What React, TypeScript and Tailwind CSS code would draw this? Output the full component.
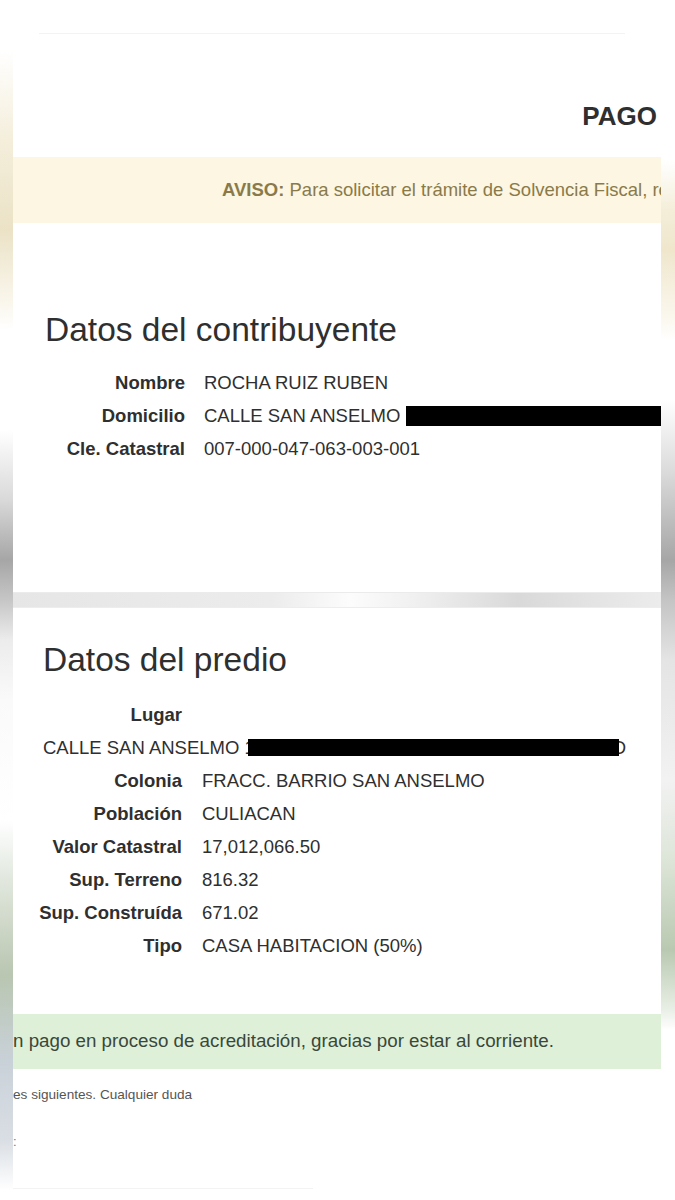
import React from "react";

const contribuyente = [
  { label: "Nombre", value: "ROCHA RUIZ RUBEN" },
  { label: "Domicilio", value: "CALLE SAN ANSELMO", redacted: true },
  { label: "Cle. Catastral", value: "007-000-047-063-003-001" },
];

const predio = [
  { label: "Colonia", value: "FRACC. BARRIO SAN ANSELMO" },
  { label: "Población", value: "CULIACAN" },
  { label: "Valor Catastral", value: "17,012,066.50" },
  { label: "Sup. Terreno", value: "816.32" },
  { label: "Sup. Construída", value: "671.02" },
  { label: "Tipo", value: "CASA HABITACION (50%)" },
];

const Row = ({ label, value, redacted, labelW }: { label: string; value: string; redacted?: boolean; labelW: string }) => (
  <div className="flex items-center h-[33px] whitespace-nowrap">
    <span className={`${labelW} shrink-0 text-right font-bold`}>{label}</span>
    <span className="ml-[19px]">{value}</span>
    {redacted && <span className="flex-1 ml-[6px] h-[20px] bg-black" />}
  </div>
);

export default function App() {
  return (
    <div className="w-[675px] h-[1200px] flex overflow-hidden bg-white text-[#2f2f2f] font-['Liberation_Sans',Arial,sans-serif]">
      {/* blurred backdrop, left */}
      <div className="w-[13px] shrink-0 bg-[linear-gradient(to_bottom,#fff_0px,#fff_50px,#f4eedb_140px,#ebe2c6_230px,#faf7ee_305px,#fff_330px,#fff_430px,#d9d9d9_500px,#a6a6a6_560px,#c6c6c6_600px,#ececec_640px,#fafafa_700px,#fff_820px,#e1e7dd_880px,#b9c6b1_975px,#c9d1d8_1060px,#d9dee4_1140px,#fff_1190px)]" />

      <div className="w-[648px] shrink-0 flex flex-col">
        {/* first capture */}
        <div className="h-[593px] flex flex-col bg-white border-b border-[#ebebeb]">
          <div className="mt-[33px] ml-[26px] w-[586px] h-px bg-[#f3f3f3]" />
          <div className="mt-[69px] pr-[4px] text-right text-[26px] leading-[26px] font-bold">PAGO</div>
          <div className="mt-[28px] h-[66px] flex items-center pl-[209px] bg-[#fcf6e2] text-[#8a7a4a] text-[18.5px] whitespace-nowrap overflow-hidden">
            <span>
              <b>AVISO:</b> Para solicitar el trámite de Solvencia Fiscal, re
            </span>
          </div>
          <h2 className="mt-[87px] pl-[32px] text-[33.5px] leading-[40px]">Datos del contribuyente</h2>
          <div className="mt-[16px] text-[18.5px]">
            {contribuyente.map((r) => (
              <Row key={r.label} {...r} labelW="w-[172px]" />
            ))}
          </div>
        </div>

        {/* seam between the two captures */}
        <div className="h-[14px] shrink-0 bg-[linear-gradient(to_right,#e6e6e6,#ececec_40%,#fcfcfc_52%,#f0f0f0_62%,#d9d9d9_78%,#e4e4e4_90%,#ececec)]" />

        {/* second capture */}
        <div className="flex-1 flex flex-col bg-white border-t border-[#ededed]">
          <h2 className="mt-[32px] pl-[30px] text-[33.5px] leading-[40px]">Datos del predio</h2>
          <div className="mt-[18px] text-[18.5px]">
            <div className="flex items-center h-[33px]">
              <span className="w-[169px] text-right font-bold">Lugar</span>
            </div>
            <div className="flex items-center h-[33px] pl-[30px] whitespace-nowrap">
              <span>CALLE SAN ANSELMO 1</span>
              <span className="relative z-10 -ml-[7px] w-[371px] h-[17px] bg-black" />
              <span className="-ml-[6px]">D</span>
            </div>
            {predio.map((r) => (
              <div key={r.label} className="flex items-center h-[33px] whitespace-nowrap">
                <span className="w-[169px] shrink-0 text-right font-bold">{r.label}</span>
                <span className="ml-[20px]">{r.value}</span>
              </div>
            ))}
          </div>
          <div className="mt-[52px] h-[55px] flex items-center bg-[#dff0d8] text-[#3a473a] text-[18.75px] whitespace-nowrap overflow-hidden">
            n pago en proceso de acreditación, gracias por estar al corriente.
          </div>
          <p className="mt-[18px] text-[13.6px] leading-[16px] text-[#555]">es siguientes. Cualquier duda</p>
          <p className="mt-[31px] text-[13px] leading-[16px] text-[#777]">:</p>
          <div className="mt-[38px] w-[300px] h-px bg-[#f3f3f3]" />
        </div>
      </div>

      {/* blurred backdrop, right */}
      <div className="flex-1 bg-[linear-gradient(to_bottom,#fff_0px,#fff_160px,#f4eed9_210px,#efe6cc_250px,#fbf8ef_320px,#fff_340px,#fff_400px,#dcdcdc_470px,#a6a6a6_560px,#c4c4c4_600px,#e4e4e4_660px,#f2f2f2_780px,#dde5d8_860px,#b9c9b1_950px,#e9efe6_1010px,#fff_1030px)]" />
    </div>
  );
}
